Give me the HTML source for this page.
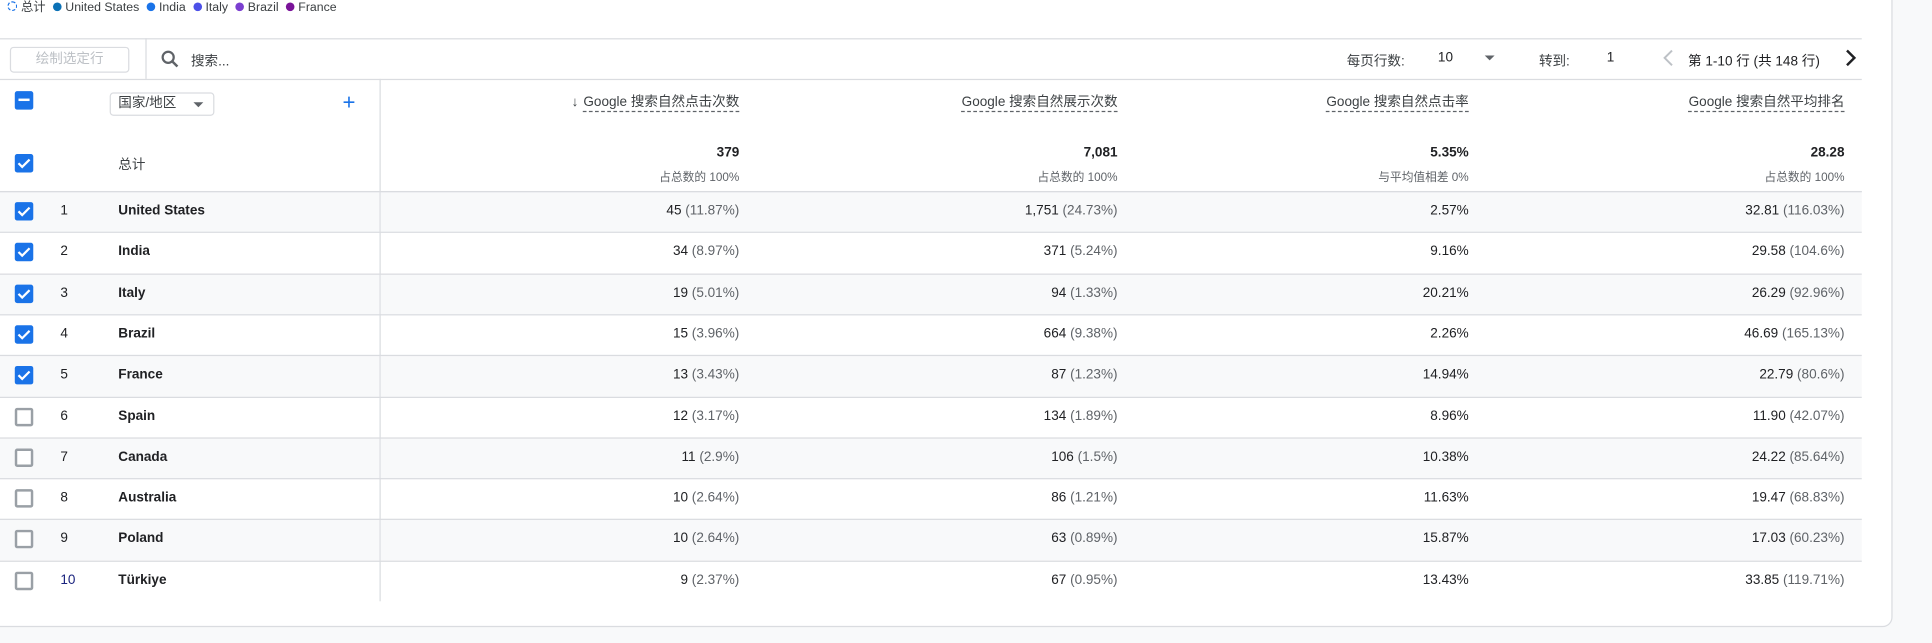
<!DOCTYPE html>
<html><head><meta charset="utf-8"><style>
html,body{margin:0;padding:0;width:1932px;height:643px;overflow:hidden;background:#f8f9fa}
#w{position:absolute;left:0;top:0;width:1568px;height:522px;transform:scale(1.23214);transform-origin:0 0;font-family:"Liberation Sans","Noto Sans CJK SC",sans-serif;color:#202124;font-size:11px}
.card{position:absolute;left:-2px;top:-10px;width:1536px;height:517px;background:#fff;border:1px solid #dadce0;border-radius:0 0 8px 0}
.a{position:absolute;white-space:nowrap}
.dot{display:inline-block;width:7px;height:7px;border-radius:50%;margin:0 3px 0 6px;vertical-align:0}
.hl{position:absolute;left:0;width:1511px;height:1px;background:#dadce0}
.cb{position:absolute;left:12px;width:15px;height:15px;border-radius:2px;box-sizing:border-box}
.on{background:#1a73e8}
.off{border:2px solid #9aa0a6;background:#fff}
.r{position:absolute;text-align:right}
.g{color:#5f6368}
.hd{border-bottom:1px dashed #5f6368;padding-bottom:1px;color:#3c4043}
</style></head><body><div id="w">
<div class="card"></div>
<div class="a" style="left:4px;top:-3px;font-size:10px;color:#3c4043"><span class="dot" style="margin-left:2px;border:1px dashed #1a73e8;width:6px;height:6px;background:#fff"></span>总计<span class="dot" style="background:#1967d2;background:#0b71b6"></span>United States<span class="dot" style="background:#1a73e8"></span>India<span class="dot" style="background:#4c50e8"></span>Italy<span class="dot" style="background:#7b3fd0"></span>Brazil<span class="dot" style="background:#7a1399"></span>France</div>
<div class="hl" style="top:31px"></div>
<div class="a" style="left:8px;top:38px;width:95px;height:19px;border:1px solid #dadce0;border-radius:3px;color:#bdc1c6;text-align:center;line-height:19px">绘制选定行</div>
<div class="a" style="left:118px;top:31px;width:1px;height:33px;background:#dadce0"></div>
<svg class="a" style="left:130px;top:40px" width="16" height="16" viewBox="0 0 16 16"><circle cx="6.5" cy="6.5" r="4.5" fill="none" stroke="#5f6368" stroke-width="1.8"/><path d="M10 10l4 4" stroke="#5f6368" stroke-width="2"/></svg>
<div class="a" style="left:155px;top:41px;color:#3c4043">搜索...</div>
<div class="a" style="left:1093px;top:41px;color:#3c4043">每页行数:</div>
<div class="a" style="left:1167px;top:41px">10</div>
<div class="a" style="left:1205px;top:45px;width:0;height:0;border-left:4px solid transparent;border-right:4px solid transparent;border-top:4px solid #5f6368"></div>
<div class="a" style="left:1249px;top:41px;color:#3c4043">转到:</div>
<div class="a" style="left:1304px;top:41px">1</div>
<svg class="a" style="left:1349px;top:40px" width="10" height="14"><path d="M8 1L2 7l6 6" fill="none" stroke="#bdc1c6" stroke-width="1.6"/></svg>
<div class="a" style="left:1370px;top:41px">第 1-10 行 (共 148 行)</div>
<svg class="a" style="left:1497px;top:40px" width="10" height="14"><path d="M2 1l6 6-6 6" fill="none" stroke="#202124" stroke-width="2"/></svg>
<div class="hl" style="top:64px"></div>
<div class="a" style="left:308px;top:64px;width:1px;height:424px;background:#dadce0"></div>
<div class="cb on" style="top:74px"><div style="position:absolute;left:3px;top:6px;width:9px;height:2px;background:#fff"></div></div>
<div class="a" style="left:89px;top:75px;width:85px;height:19px;border:1px solid #dadce0;border-radius:3px;box-sizing:border-box;line-height:17px;padding-left:6px;color:#3c4043">国家/地区<span style="position:absolute;left:67px;top:7px;border-left:4px solid transparent;border-right:4px solid transparent;border-top:4px solid #5f6368"></span></div>
<div class="a" style="left:278px;top:73px;font-size:18px;color:#1a73e8">+</div>
<div class="cb on" style="top:125px"><svg width="15" height="15"><path d="M3 7.5l3 3 6-6" fill="none" stroke="#fff" stroke-width="1.8"/></svg></div>
<div class="a" style="left:96px;top:125px;color:#3c4043">总计</div>
<div class="r" style="right:968px;top:74px"><span style="color:#3c4043;margin-right:4px">↓</span><span class="hd">Google 搜索自然点击次数</span></div>
<div class="r" style="right:661px;top:74px"><span class="hd">Google 搜索自然展示次数</span></div>
<div class="r" style="right:376px;top:74px"><span class="hd">Google 搜索自然点击率</span></div>
<div class="r" style="right:71px;top:74px"><span class="hd">Google 搜索自然平均排名</span></div>
<div class="r" style="right:968px;top:118px;font-weight:bold">379</div><div class="r g" style="right:968px;top:136px;font-size:9.5px">占总数的 100%</div>
<div class="r" style="right:661px;top:118px;font-weight:bold">7,081</div><div class="r g" style="right:661px;top:136px;font-size:9.5px">占总数的 100%</div>
<div class="r" style="right:376px;top:118px;font-weight:bold">5.35%</div><div class="r g" style="right:376px;top:136px;font-size:9.5px">与平均值相差 0%</div>
<div class="r" style="right:71px;top:118px;font-weight:bold">28.28</div><div class="r g" style="right:71px;top:136px;font-size:9.5px">占总数的 100%</div>
<div id="rows"></div>
</div>
<script>
var d=[["United States","45","11.87%","1,751","24.73%","2.57%","32.81","116.03%"],["India","34","8.97%","371","5.24%","9.16%","29.58","104.6%"],["Italy","19","5.01%","94","1.33%","20.21%","26.29","92.96%"],["Brazil","15","3.96%","664","9.38%","2.26%","46.69","165.13%"],["France","13","3.43%","87","1.23%","14.94%","22.79","80.6%"],["Spain","12","3.17%","134","1.89%","8.96%","11.90","42.07%"],["Canada","11","2.9%","106","1.5%","10.38%","24.22","85.64%"],["Australia","10","2.64%","86","1.21%","11.63%","19.47","68.83%"],["Poland","10","2.64%","63","0.89%","15.87%","17.03","60.23%"],["Türkiye","9","2.37%","67","0.95%","13.43%","33.85","119.71%"]];
var h='',tops=[155,188,222,255,288,322,355,388,421,455,488];
for(var i=0;i<10;i++){var t=tops[i],r=d[i],ht=tops[i+1]-t;
if(i%2==0)h+='<div class="a" style="left:0;top:'+t+'px;width:308px;height:'+ht+'px;background:#f8f9fa;z-index:-0"></div><div class="a" style="left:309px;top:'+t+'px;width:1202px;height:'+ht+'px;background:#f8f9fa"></div>';
h+='<div class="hl" style="top:'+t+'px"></div>';
var y=t+9;
h+=i<5?'<div class="cb on" style="top:'+y+'px"><svg width="15" height="15"><path d="M3 7.5l3 3 6-6" fill="none" stroke="#fff" stroke-width="1.8"/></svg></div>':'<div class="cb off" style="top:'+y+'px"></div>';
h+='<div class="a" style="left:49px;top:'+(t+10)+'px;'+(i==9?'color:#1a237e':'')+'">'+(i+1)+'</div>';
h+='<div class="a" style="left:96px;top:'+(t+10)+'px;font-weight:bold">'+r[0]+'</div>';
h+='<div class="r" style="right:968px;top:'+(t+10)+'px">'+r[1]+' <span class="g">('+r[2]+')</span></div>';
h+='<div class="r" style="right:661px;top:'+(t+10)+'px">'+r[3]+' <span class="g">('+r[4]+')</span></div>';
h+='<div class="r" style="right:376px;top:'+(t+10)+'px">'+r[5]+'</div>';
h+='<div class="r" style="right:71px;top:'+(t+10)+'px">'+r[6]+' <span class="g">('+r[7]+')</span></div>';}
h+='<div class="hl" style="top:155px"></div>';
document.getElementById('rows').innerHTML=h;
</script>
</body></html>
